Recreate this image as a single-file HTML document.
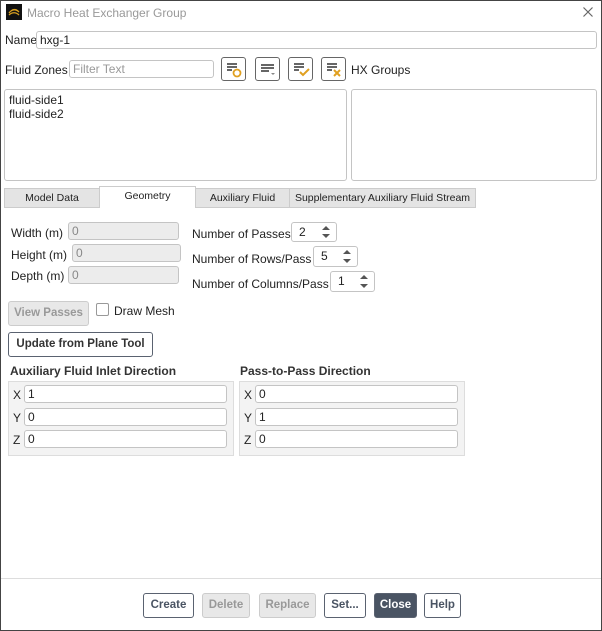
<!DOCTYPE html>
<html><head><style>
*{box-sizing:border-box;margin:0;padding:0}
body{width:602px;height:631px;background:#fff;font-family:"Liberation Sans",sans-serif;font-size:12px;color:#222;position:relative;overflow:hidden}
.a{position:absolute}
.frame{left:0;top:0;width:602px;height:631px;border:1px solid #444}
.in{position:absolute;border:1px solid #c4c4c4;border-radius:3px;background:#fff;padding-left:3px;font-size:12px;line-height:16px}
.dis{background:#ececec;color:#888}
.lbl{position:absolute;font-size:12px;line-height:14px}
.ib{position:absolute;width:25px;height:24px;border:1px solid #666;border-radius:3px;background:#fff}
.tab{position:absolute;top:188px;height:20px;border:1px solid #ccc;background:#e4e4e4;font-size:10.5px;text-align:center;line-height:19px;white-space:nowrap}
.btn{position:absolute;top:593px;height:25px;border:1px solid #5a6270;border-radius:3px;background:#fff;font-weight:bold;font-size:11.5px;text-align:center;line-height:23px;color:#4a5463}
.bd{background:#e8e8e8;border-color:#ccc;color:#999}
.spin{position:absolute;border:1px solid #c4c4c4;border-radius:3px;background:#fff;padding-left:7px;line-height:18px;font-size:12px}
.spin:after{content:"";position:absolute;right:6px;top:3px;border:4px solid transparent;border-bottom:4px solid #555;border-top:none}
.spin:before{content:"";position:absolute;right:6px;bottom:3px;border:4px solid transparent;border-top:4px solid #555;border-bottom:none}
.grp{position:absolute;border:1px solid #ddd;background:#f3f3f3}
.h{position:absolute;font-weight:bold;font-size:12px;color:#333}
</style></head><body>
<div class="a frame"></div>
<div class="a" style="left:6px;top:4px;width:16px;height:16px;background:#111"><svg width="16" height="16"><path d="M3 9c3-4 7-4 10-1M3 11c3-3 7-3 10 0M5 7c2-2 5-2 7 0" stroke="#d9a020" stroke-width="1.3" fill="none"/></svg></div>
<div class="lbl" style="left:27px;top:6px;color:#999">Macro Heat Exchanger Group</div>
<svg class="a" style="left:583px;top:7px" width="10" height="10"><path d="M0.5 0.5l9 9M9.5 0.5l-9 9" stroke="#666" stroke-width="1.2"/></svg>
<div class="lbl" style="left:5px;top:33px">Name</div>
<div class="in" style="left:36px;top:31px;width:561px;height:18px">hxg-1</div>
<div class="lbl" style="left:5px;top:63px">Fluid Zones</div>
<div class="in" style="left:69px;top:60px;width:145px;height:18px;color:#999">Filter Text</div>
<div class="ib" style="left:221px;top:57px"><svg width="23" height="22"><path d="M5 6h10M5 9h10M5 12h5" stroke="#333" stroke-width="1.6"/><circle cx="15" cy="15" r="3.5" stroke="#e0a020" stroke-width="1.8" fill="none"/></svg></div>
<div class="ib" style="left:255px;top:57px"><svg width="23" height="22"><path d="M5 7h13M5 10h13M5 13h8" stroke="#333" stroke-width="1.6"/><path d="M15 15l2 2 2-2z" fill="#888"/></svg></div>
<div class="ib" style="left:288px;top:57px"><svg width="23" height="22"><path d="M5 6h10M5 9h10M5 12h5" stroke="#333" stroke-width="1.6"/><path d="M11 14l3 3 6-6" stroke="#e0a020" stroke-width="2" fill="none"/></svg></div>
<div class="ib" style="left:321px;top:57px"><svg width="23" height="22"><path d="M5 6h10M5 9h10M5 12h5" stroke="#333" stroke-width="1.6"/><path d="M12 12l6 6M18 12l-6 6" stroke="#e0a020" stroke-width="2"/></svg></div>
<div class="lbl" style="left:351px;top:63px">HX Groups</div>
<div class="in" style="left:4px;top:89px;width:343px;height:92px;padding-left:4px;line-height:14px;padding-top:3px">fluid-side1<br>fluid-side2</div>
<div class="in" style="left:351px;top:89px;width:246px;height:92px"></div>
<div class="tab" style="left:4px;width:96px">Model Data</div>
<div class="tab" style="left:99px;width:97px;top:186px;height:22px;background:#fff;border-bottom:none">Geometry</div>
<div class="tab" style="left:195px;width:95px">Auxiliary Fluid</div>
<div class="tab" style="left:289px;width:187px">Supplementary Auxiliary Fluid Stream</div>
<div class="lbl" style="left:11px;top:226px">Width (m)</div>
<div class="in dis" style="left:68px;top:222px;width:111px;height:18px">0</div>
<div class="lbl" style="left:11px;top:248px">Height (m)</div>
<div class="in dis" style="left:72px;top:244px;width:109px;height:18px">0</div>
<div class="lbl" style="left:11px;top:269px">Depth (m)</div>
<div class="in dis" style="left:68px;top:266px;width:111px;height:18px">0</div>
<div class="lbl" style="left:192px;top:227px">Number of Passes</div>
<div class="spin" style="left:291px;top:222px;width:46px;height:20px">2</div>
<div class="lbl" style="left:192px;top:252px">Number of Rows/Pass</div>
<div class="spin" style="left:313px;top:246px;width:45px;height:21px">5</div>
<div class="lbl" style="left:192px;top:277px">Number of Columns/Pass</div>
<div class="spin" style="left:330px;top:271px;width:45px;height:21px">1</div>
<div class="btn bd" style="left:8px;top:301px;width:81px">View Passes</div>
<div class="a" style="left:96px;top:303px;width:13px;height:13px;border:1px solid #999;border-radius:2px"></div>
<div class="lbl" style="left:114px;top:304px">Draw Mesh</div>
<div class="btn" style="left:8px;top:332px;width:145px;color:#333">Update from Plane Tool</div>
<div class="h" style="left:10px;top:364px">Auxiliary Fluid Inlet Direction</div>
<div class="grp" style="left:8px;top:381px;width:226px;height:75px"></div>
<div class="lbl" style="left:13px;top:388px">X</div><div class="in" style="left:24px;top:385px;width:203px;height:18px">1</div>
<div class="lbl" style="left:13px;top:411px">Y</div><div class="in" style="left:24px;top:408px;width:203px;height:18px">0</div>
<div class="lbl" style="left:13px;top:433px">Z</div><div class="in" style="left:24px;top:430px;width:203px;height:18px">0</div>
<div class="h" style="left:240px;top:364px">Pass-to-Pass Direction</div>
<div class="grp" style="left:239px;top:381px;width:226px;height:75px"></div>
<div class="lbl" style="left:244px;top:388px">X</div><div class="in" style="left:255px;top:385px;width:203px;height:18px">0</div>
<div class="lbl" style="left:244px;top:411px">Y</div><div class="in" style="left:255px;top:408px;width:203px;height:18px">1</div>
<div class="lbl" style="left:244px;top:433px">Z</div><div class="in" style="left:255px;top:430px;width:203px;height:18px">0</div>
<div class="a" style="left:1px;top:578px;width:600px;height:1px;background:#ddd"></div>
<div class="btn" style="left:143px;width:51px">Create</div>
<div class="btn bd" style="left:202px;width:48px">Delete</div>
<div class="btn bd" style="left:259px;width:57px">Replace</div>
<div class="btn" style="left:324px;width:42px">Set...</div>
<div class="btn" style="left:374px;width:43px;background:#4a5463;color:#fff">Close</div>
<div class="btn" style="left:424px;width:37px">Help</div>
</body></html>
